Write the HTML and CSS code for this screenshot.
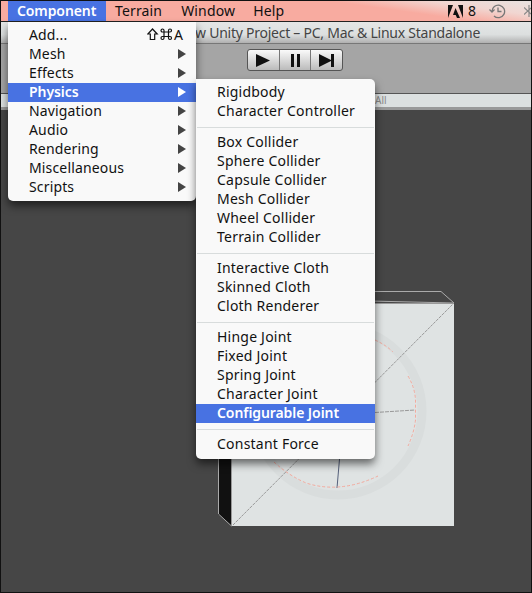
FILE: index.html
```html
<!DOCTYPE html>
<html lang="en">
<head>
<meta charset="utf-8">
<title>Unity</title>
<link rel="stylesheet" href="styles.css">
</head>
<body>
<div class="screen">
  <header class="menubar">
    <nav class="menus">
      <span class="menu-title active">Component</span>
      <span class="menu-title">Terrain</span>
      <span class="menu-title">Window</span>
      <span class="menu-title">Help</span>
    </nav>
    <div class="status">
      <svg class="adobe" width="15" height="13" viewBox="0 0 15 13"><path d="M0 0h5L0 13zM10 0h5v13zM7.500 3l4.500 10H9l-1.300-3H5z" fill="#111"/></svg>
      <span class="count">8</span>
      <svg class="clock" width="17" height="16" viewBox="0 0 17 16" fill="none" stroke="#777" stroke-width="1.300"><path d="M3 8.500a6.300 6.300 0 1 1 2 4.500M.5 6.500 3 9l2.500-2.500M9 4.500V8.500h3.500"/></svg>
      <svg class="bluetooth" width="7" height="14" viewBox="0 0 7 14" fill="none" stroke="#888" stroke-width="1.200"><path d="M0 3.500 7 10M0 10.500 7 4M5 1v12"/></svg>
    </div>
  </header>
  <div class="titlebar"><span class="title">w Unity Project – PC, Mac &amp; Linux Standalone</span></div>
  <div class="toolbar">
    <div class="playback">
      <span class="btn"><svg width="16" height="13" viewBox="0 0 16 13"><path d="M1 0 15 6.500 1 13z"/></svg></span>
      <span class="btn"><svg width="16" height="13" viewBox="0 0 16 13"><path d="M4 0h3v13H4zM10 0h3v13h-3z"/></svg></span>
      <span class="btn"><svg width="16" height="13" viewBox="0 0 16 13"><path d="M0 0 12 6V0h3v13h-3V7L0 13z"/></svg></span>
    </div>
  </div>
  <div class="tabstrip"><span class="search">All</span></div>
  <main class="scene">
    <svg class="cube" width="240" height="240" viewBox="216 290 240 240">
      <path d="M218 308V514L231.500 526V303z" fill="#111"/>
      <path d="M218.500 300V514L231.500 526M370 291.500h71l13 11.500M370 301l84 2" fill="none" stroke="#aaa"/>
      <path d="M232 303.500H454V526H232z" fill="#dfe3e3"/>
      <path d="M231.500 526V303.500H454" fill="none" stroke="#999"/>
      <circle cx="338" cy="411" r="84" fill="none" stroke="#d9dddd" stroke-width="9"/>
      <path d="M233 525 453 304" stroke="#999" stroke-dasharray="3 1"/>
      <path d="M339.500 459 337 488" stroke="#56617c"/>
      <path d="M375 412.500 415 410" stroke="#999" stroke-dasharray="4 1"/>
      <path d="M375 340Q386 345 393 352M408 376Q415 388 415.500 400V420Q414 433 408 446M274 462Q288 475 306 483Q340 494 378 476" fill="none" stroke="#f3aa9e" stroke-dasharray="3 2"/>
    </svg>
  </main>

  <div class="menu component-menu">
    <div class="item"><span>Add...</span><span class="shortcut"><svg width="36" height="13" viewBox="0 0 36 13" fill="none" stroke="#111" stroke-width="1.200"><path d="M5.500 1 .8 6H3.300v5.500h4.400V6h2.500zM17 4h4.500v4.500H17zM17 4h-1.300A1.500 1.500 0 1 1 17 2.500zM21.500 4V2.500A1.500 1.500 0 1 1 23 4zM17 8.500V10a1.500 1.500 0 1 1-1.500-1.500zM21.500 8.500H23a1.500 1.500 0 1 1-1.500 1.500z"/></svg><b>A</b></span></div>
    <div class="item"><span>Mesh</span><i class="arrow"></i></div>
    <div class="item"><span>Effects</span><i class="arrow"></i></div>
    <div class="item selected"><span>Physics</span><i class="arrow"></i></div>
    <div class="item"><span>Navigation</span><i class="arrow"></i></div>
    <div class="item"><span>Audio</span><i class="arrow"></i></div>
    <div class="item"><span>Rendering</span><i class="arrow"></i></div>
    <div class="item"><span>Miscellaneous</span><i class="arrow"></i></div>
    <div class="item"><span>Scripts</span><i class="arrow"></i></div>
  </div>

  <div class="menu physics-menu">
    <div class="item">Rigidbody</div>
    <div class="item">Character Controller</div>
    <hr>
    <div class="item">Box Collider</div>
    <div class="item">Sphere Collider</div>
    <div class="item">Capsule Collider</div>
    <div class="item">Mesh Collider</div>
    <div class="item">Wheel Collider</div>
    <div class="item">Terrain Collider</div>
    <hr>
    <div class="item">Interactive Cloth</div>
    <div class="item">Skinned Cloth</div>
    <div class="item">Cloth Renderer</div>
    <hr>
    <div class="item">Hinge Joint</div>
    <div class="item">Fixed Joint</div>
    <div class="item">Spring Joint</div>
    <div class="item">Character Joint</div>
    <div class="item selected">Configurable Joint</div>
    <hr>
    <div class="item">Constant Force</div>
  </div>
</div>
</body>
</html>
```
FILE: styles.css
```css
* { box-sizing: border-box; }
body { margin: 0; font-family: "Noto Sans", "Open Sans", sans-serif; font-size: 14px; color: #111; }
.screen { position: relative; width: 532px; height: 593px; border: 1px solid #111; background: #464646; overflow: hidden; display: flex; flex-direction: column; }
.menubar { height: 21px; flex: none; display: flex; justify-content: space-between; background: linear-gradient(188deg, #e8e2e0 0, #f1d6d1 14px, #f8aba0 28px); border-bottom: 1px solid #222; padding-left: 7px; }
.menus { display: flex; line-height: 20px; }
.menu-title { height: 20px; padding: 0 9px; white-space: nowrap; letter-spacing: .15px; }
.menu-title.active { width: 98px; background: #4872e2; color: #fff; font-weight: 600; letter-spacing: -.1px; }
.menu-title:nth-child(3) { padding-left: 10px; }
.status { display: flex; align-items: center; line-height: 20px; }
.count { margin: 0 13px 0 5px; }
.bluetooth { margin-left: 18px; }
.titlebar { height: 22px; flex: none; background: linear-gradient(#e4e6e6, #dcdfdf 60%, #b0b0b0); border-bottom: 1px solid #777; padding-left: 194px; line-height: 22px; color: #444; white-space: nowrap; letter-spacing: -.25px; }
.toolbar { height: 49px; flex: none; background: #a5a5a5; padding: 5px 0 0 246px; }
.playback { display: flex; width: 96px; height: 22px; border: 1px solid #555; border-radius: 3px; background: linear-gradient(#fafafa, #bbb); }
.btn { flex: 1; display: flex; align-items: center; justify-content: center; }
.btn + .btn { border-left: 1px solid #777; }
.btn svg { fill: #111; }
.tabstrip { height: 17px; flex: none; border-top: 1px solid #555; border-bottom: 3px solid #999; background: #dce0e0; padding-left: 374px; font-size: 10px; line-height: 13px; color: #888; }
.scene { flex: 1; padding: 180px 0 0 215px; }
.cube { display: block; }
.menu { position: absolute; background: #f9f9f9; padding: 4px 0; box-shadow: 0 5px 9px rgba(0,0,0,.55); }
.component-menu { left: 7px; top: 21px; width: 188px; height: 179px; border-radius: 0 0 5px 5px; }
.physics-menu { left: 195px; top: 78px; width: 179px; height: 380px; border-radius: 0 5px 5px 5px; }
.item { height: 19px; line-height: 17px; padding: 0 10px 2px 21px; display: flex; align-items: center; justify-content: space-between; white-space: nowrap; letter-spacing: .15px; }
.physics-menu .item { letter-spacing: .22px; }
.menu .item.selected { background: #4872e2; color: #fff; font-weight: 600; letter-spacing: -.08px; }
.arrow { border-left: 8px solid #444; border-top: 5px solid transparent; border-bottom: 5px solid transparent; }
.selected .arrow { border-left-color: #fff; }
.shortcut { display: flex; align-items: center; margin-right: 3px; }
.shortcut svg { margin-right: -9px; }
.shortcut b { font-weight: 400; }
hr { height: 1px; margin: 6px 1px 5px; border: 0; background: #d8dcdc; }
```
